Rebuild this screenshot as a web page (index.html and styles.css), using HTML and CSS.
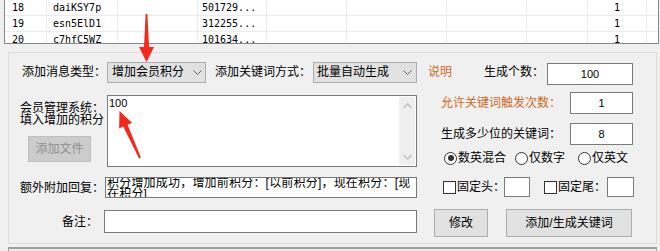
FILE: index.html
```html
<!DOCTYPE html>
<html lang="zh-CN">

<head>
    <meta charset="UTF-8">
    <title>添加关键词</title>
    <link rel="stylesheet" href="styles.css">
</head>

<body>
    <!-- 关键词列表 -->
    <div id="listBox">
        <div class="row">
            <span class="c1">18</span><span class="c2">daiKSY7p</span><span class="c3"></span><span class="c4">501729...</span><span class="c5"></span><span class="c6"></span><span class="c7"></span><span class="c8"></span><span class="c9">1</span><span class="c10"></span>
        </div>
        <div class="row">
            <span class="c1">19</span><span class="c2">esn5ElD1</span><span class="c3"></span><span class="c4">312255...</span><span class="c5"></span><span class="c6"></span><span class="c7"></span><span class="c8"></span><span class="c9">1</span><span class="c10"></span>
        </div>
        <div class="row">
            <span class="c1">20</span><span class="c2">c7hfC5WZ</span><span class="c3"></span><span class="c4">101634...</span><span class="c5"></span><span class="c6"></span><span class="c7"></span><span class="c8"></span><span class="c9">1</span><span class="c10"></span>
        </div>
    </div>

    <!-- 编辑区 -->
    <div id="editBox">
        <div class="topLine">
            <span class="lab1">添加消息类型：</span>
            <div class="sel sel1">增加会员积分
                <svg width="9" height="5" viewBox="0 0 9 5"><polyline points="0.5,0.5 4.5,4.5 8.5,0.5" fill="none" stroke="#606060" /></svg>
            </div>
            <span class="lab2">添加关键词方式：</span>
            <div class="sel sel2">批量自动生成
                <svg width="9" height="5" viewBox="0 0 9 5"><polyline points="0.5,0.5 4.5,4.5 8.5,0.5" fill="none" stroke="#606060" /></svg>
            </div>
            <a href="javascript:;" class="help">说明</a>
            <span class="lab3">生成个数：</span>
            <div class="txt numTxt">100</div>
        </div>

        <div class="mainLine">
            <div class="leftCol">
                <div class="memberRow">
                    <div class="memberSide">
                        <p>会员管理系统：<br>填入增加的积分</p>
                        <a href="javascript:;" class="btn btnOff">添加文件</a>
                    </div>
                    <div class="memo">
                        <div class="memoTxt">100</div>
                        <div class="scroll">
                            <span><svg width="9" height="6" viewBox="0 0 9 6"><polyline points="0.5,5 4.5,1 8.5,5" fill="none" stroke="#c4c4c4" stroke-width="1.6" /></svg></span>
                            <span><svg width="9" height="6" viewBox="0 0 9 6"><polyline points="0.5,1 4.5,5 8.5,1" fill="none" stroke="#c4c4c4" stroke-width="1.6" /></svg></span>
                        </div>
                    </div>
                </div>
                <div class="replyRow">
                    <span class="lab4">额外附加回复：</span>
                    <div class="txt replyTxt"><p>积分增加成功，增加前积分：[以前积分]，现在积分：[现在积分]</p></div>
                </div>
                <div class="noteRow">
                    <span class="lab5">备注：</span>
                    <div class="txt noteTxt"></div>
                </div>
            </div>

            <div class="rightCol">
                <div class="setRow first">
                    <span class="warn">允许关键词触发次数：</span>
                    <div class="txt smallTxt">1</div>
                </div>
                <div class="setRow">
                    <span>生成多少位的关键词：</span>
                    <div class="txt smallTxt">8</div>
                </div>
                <div class="radioRow">
                    <label class="radio on"><i></i>数英混合</label>
                    <label class="radio r2"><i></i>仅数字</label>
                    <label class="radio r3"><i></i>仅英文</label>
                </div>
                <div class="checkRow">
                    <i class="box"></i><span>固定头：</span><div class="txt tinyTxt"></div>
                    <i class="box box2"></i><span>固定尾：</span><div class="txt tinyTxt tail"></div>
                </div>
                <div class="btnRow">
                    <a href="javascript:;" class="btn btnEdit">修改</a>
                    <a href="javascript:;" class="btn btnAdd">添加/生成关键词</a>
                </div>
            </div>
        </div>
    </div>
    <div class="statusBox"></div>

    <!-- 红色标注箭头 -->
    <svg class="marks" width="660" height="251" viewBox="0 0 660 251">
        <polygon points="145.6,14 147.4,14 149,47 154,47 146.5,62 139,47 144,47" fill="#f5281e" />
        <polygon points="119.5,111 132,122.8 127.6,124.8 140.9,157.6 139.1,158.4 123.2,126.6 119.1,128.6" fill="#f5281e" />
    </svg>
</body>

</html>
```

FILE: styles.css
```css
* {
    margin: 0;
    padding: 0;
    box-sizing: border-box;
}

a {
    text-decoration: none;
    color: #000;
}

body {
    position: relative;
    width: 660px;
    height: 251px;
    overflow: hidden;
    background: #f0f0f0;
    color: #000;
    font: 12px/12px "Liberation Sans", "Noto Sans CJK SC", sans-serif;
}

/* 列表 */
#listBox {
    margin-left: 4px;
    width: 655px;
    height: 44px;
    border: 1px solid #828790;
    border-top: 0;
    background: #fff;
    overflow: hidden;
}

#listBox .row {
    display: flex;
    height: 16px;
    border-bottom: 1px solid #ececec;
}

#listBox span {
    height: 15px;
    border-right: 1px solid #ececec;
    font: 10px/15px "DejaVu Sans Mono", monospace;
    white-space: nowrap;
}

#listBox .c1 { width: 42px; padding-left: 7px; }
#listBox .c2 { width: 71px; padding-left: 6px; }
#listBox .c3 { width: 80px; }
#listBox .c4 { width: 69px; padding-left: 4px; }
#listBox .c5 { width: 80px; }
#listBox .c6 { width: 100px; }
#listBox .c7 { width: 80px; }
#listBox .c8 { width: 61px; }
#listBox .c9 { width: 59px; text-align: center; }
#listBox .c10 { flex: 1; border-right: 0; }

/* 编辑区 */
#editBox {
    margin: 8px 0 0 8px;
    width: 649px;
    height: 192px;
    border: 1px solid #dcdcdc;
    padding: 9px 0 0 10px;
}

.topLine {
    display: flex;
    align-items: flex-start;
    height: 22px;
    margin-left: 3px;
    line-height: 21px;
}

.lab1 { width: 85px; }
.lab2 { width: 98px; margin-left: 9px; }
.lab3 { width: 63px; }

.sel {
    display: flex;
    align-items: center;
    justify-content: space-between;
    height: 21px;
    border: 1px solid #adadad;
    background: #e1e1e1;
    white-space: nowrap;
}

.sel1 { width: 99px; padding: 0 3px 0 4px; }
.sel2 { width: 104px; padding: 0 4px 0 3px; }

.help {
    width: 56px;
    margin-left: 11px;
    color: #d2691e;
}

.txt {
    border: 1px solid #7a7a7a;
    background: #fff;
    overflow: hidden;
}

.numTxt,
.smallTxt {
    height: 22px;
    font-size: 11px;
    line-height: 20px;
    text-align: center;
}

.numTxt {
    width: 86px;
    margin-top: 1px;
}

.mainLine {
    display: flex;
}

.leftCol {
    width: 398px;
}

.memberRow {
    display: flex;
    margin-top: 11px;
}

.memberSide {
    width: 88px;
}

.memberSide p {
    padding: 7px 0 0 1px;
    line-height: 12px;
}

.btn {
    display: block;
    border: 1px solid #adadad;
    background: #e1e1e1;
    text-align: center;
}

.btnOff {
    width: 63px;
    height: 26px;
    margin: 10px 0 0 9px;
    line-height: 24px;
    border-color: #bfbfbf;
    background: #cccccc;
    color: #8f8f8f;
}

.memo {
    display: flex;
    width: 310px;
    height: 72px;
    border: 1px solid #7a7a7a;
    background: #fff;
}

.memoTxt {
    flex: 1;
    padding: 1px 0 0 1px;
    font-size: 11px;
    line-height: 12px;
}

.scroll {
    display: flex;
    flex-direction: column;
    justify-content: space-between;
    width: 16px;
    margin: 1px 1px 0 0;
    height: 68px;
    background: #efefef;
}

.scroll span {
    display: flex;
    align-items: center;
    justify-content: center;
    height: 17px;
}

.replyRow,
.noteRow {
    display: flex;
    align-items: center;
}

.replyRow {
    margin-top: 10px;
}

.lab4 {
    width: 86px;
    padding-left: 1px;
}

.replyTxt {
    width: 312px;
    height: 21px;
    padding-left: 1px;
    line-height: 11px;
}

.replyTxt p {
    width: 309px;
    letter-spacing: 0.2px;
}

.noteRow {
    margin-top: 12px;
}

.lab5 {
    width: 85px;
    padding-right: 6px;
    text-align: right;
}

.noteTxt {
    width: 313px;
    height: 23px;
}

/* 右侧设置 */
.rightCol {
    width: 199px;
    margin-left: 17px;
}

.setRow {
    display: flex;
    justify-content: flex-end;
    align-items: center;
    margin-top: 9px;
}

.setRow.first {
    margin-top: 8px;
}

.setRow span {
    margin-right: 9px;
}

.warn {
    color: #d2691e;
}

.smallTxt {
    width: 63px;
}

.radioRow {
    display: flex;
    align-items: center;
    height: 20px;
    margin-top: 3px;
    padding-left: 10px;
}

.radio {
    display: flex;
    align-items: center;
}

.radio i {
    position: relative;
    width: 13px;
    height: 13px;
    margin-right: 1px;
    border: 1px solid #333;
    border-radius: 50%;
    background: #fff;
}

.radio.on i::after {
    content: "";
    position: absolute;
    left: 2.5px;
    top: 2.5px;
    width: 6px;
    height: 6px;
    border-radius: 50%;
    background: #333;
}

.r2 { margin-left: 9px; }
.r3 { margin-left: 13px; }

.checkRow {
    display: flex;
    align-items: center;
    height: 20px;
    margin-top: 9px;
    padding-left: 9px;
}

.box {
    flex-shrink: 0;
    width: 13px;
    height: 13px;
    margin-right: 1px;
    border: 1px solid #333;
    background: #fff;
}

.box2 {
    margin-left: 14px;
}

.checkRow span {
    flex-shrink: 0;
    width: 47px;
    white-space: nowrap;
}

.tinyTxt {
    flex-shrink: 0;
    width: 26px;
    height: 20px;
}

.tinyTxt.tail {
    width: 27px;
    margin-left: 2px;
}

.btnRow {
    display: flex;
    margin-top: 12px;
}

.btnRow .btn {
    height: 28px;
    line-height: 26px;
}

.btnEdit { width: 54px; }
.btnAdd { width: 126px; margin-left: 18px; }

.statusBox {
    margin: 3px 0 0 8px;
    width: 649px;
    height: 10px;
    border: 1px solid #a0a0a0;
    border-top-width: 2px;
    background: #ebebeb;
}

.marks {
    position: absolute;
    left: 0;
    top: 0;
    pointer-events: none;
}
```
